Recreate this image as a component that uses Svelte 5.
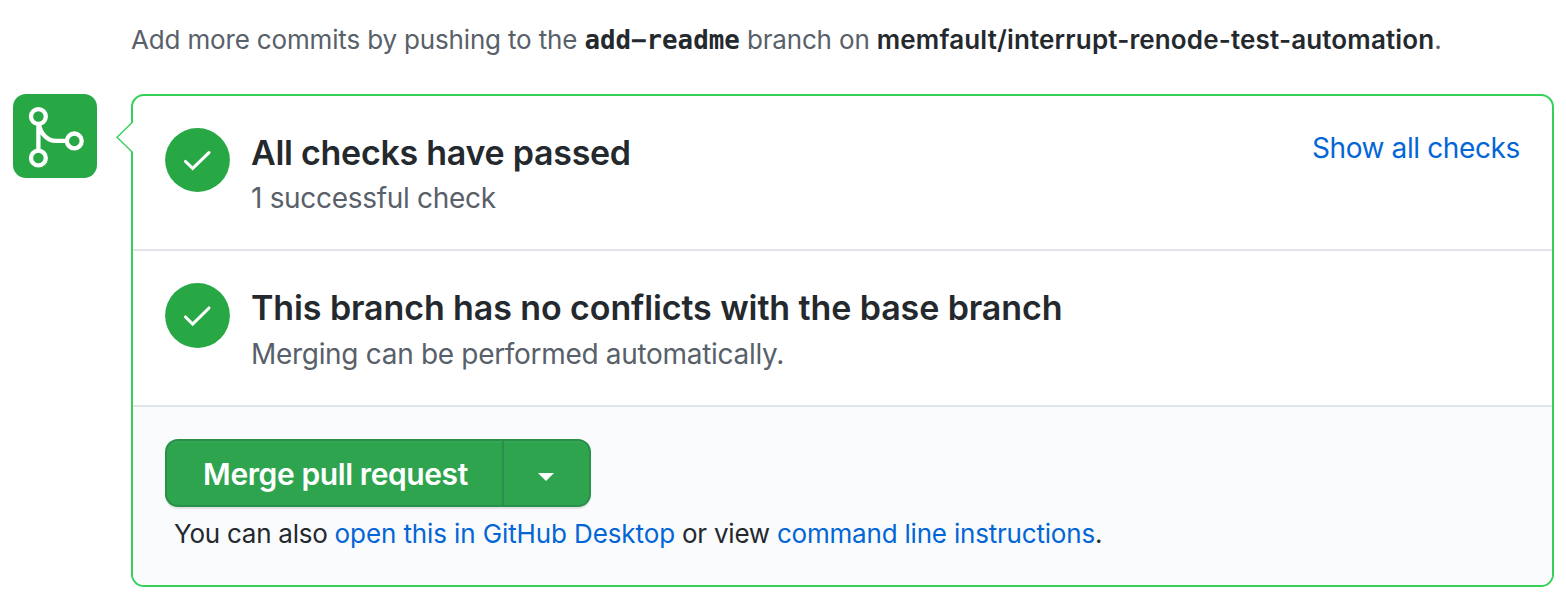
<script>
  const checks = [
    { title: 'All checks have passed', note: '1 successful check', cls: 'first', action: 'Show all checks' },
    { title: 'This branch has no conflicts with the base branch', note: 'Merging can be performed automatically.', cls: 'second', action: '' }
  ];
</script>

<main>
  <p class="hint">Add more commits by pushing to the <code>add−readme</code> branch on <b>memfault/interrupt-renode-test-automation</b>.</p>
  <div class="merge">
    <div class="badge">
      <svg width="84" height="84" viewBox="13 94 84 84" fill="none" stroke="#fff" stroke-width="4.3">
        <circle cx="38.4" cy="116.5" r="7.4" />
        <circle cx="38.4" cy="158" r="7.4" />
        <circle cx="74.3" cy="140.9" r="7.4" />
        <path d="M38.4 124v27M39 124C40.5 133.500 47 140.900 56 140.900H67" />
      </svg>
    </div>
    <section class="box">
      <svg class="arrow" width="18" height="32" viewBox="0 0 18 32">
        <path d="M18 0H16.3L1.2 15.200L16.3 30.500H18Z" fill="#fff" />
        <path d="M16.7 0L1 15.200L16.7 30.500" fill="none" stroke="#34d058" stroke-width="1.4" />
      </svg>
      {#each checks as check}
        <div class="row {check.cls}">
          <svg class="status" viewBox="0 0 65 65" preserveAspectRatio="none">
            <circle cx="32.5" cy="32.5" r="32.4" fill="#28a745" />
            <path d="M20.5 34L27.7 41L44 25" fill="none" stroke="#fff" stroke-width="3.1" stroke-linecap="round" />
          </svg>
          <div class="copy">
            <h3>{check.title}</h3>
            <p>{check.note}</p>
          </div>
          {#if check.action}<a class="action" href="#checks">{check.action}</a>{/if}
        </div>
      {/each}
      <footer>
        <div class="buttons">
          <button class="primary">Merge pull request</button>
          <button class="caret" aria-label="Select merge method"><svg width="16" height="8" viewBox="0 0 16 8"><path d="M0 0H16L8 8Z" fill="#fff" /></svg></button>
        </div>
        <p class="also">You can also <a class="desktop" href="#desktop">open this in GitHub Desktop</a> or view <a class="cli" href="#cli">command line instructions</a>.</p>
      </footer>
    </section>
  </div>
</main>

<style>
  :global(body) { background: #fff; }
  main { box-sizing: border-box; width: 1566px; height: 602px; padding: 20px 12px 0 13px; overflow: hidden; font-family: Inter, "Liberation Sans", sans-serif; color: #24292e; }
  p, h3 { margin: 0; white-space: pre; }
  a { color: #0366d6; text-decoration: none; }
  .hint { margin-left: 118px; height: 74px; font-size: 26px; line-height: 40px; letter-spacing: -.16px; color: #586069; }
  .hint b { font-weight: 600; letter-spacing: .15px; color: #24292e; }
  code { font: 700 25.800px/30px "DejaVu Sans Mono", monospace; letter-spacing: 0; color: #24292e; }
  .merge { display: flex; gap: 34px; align-items: flex-start; }
  .badge { width: 84px; height: 84px; border-radius: 13px; background: #28a745; }
  .badge svg { display: block; }
  .box { position: relative; box-sizing: border-box; width: 1423px; height: 493px; border: 2px solid #34d058; border-radius: 13px; }
  .arrow { position: absolute; left: -17px; top: 26px; }
  .row { display: flex; box-sizing: border-box; height: 155px; padding: 32px 32px 0; border-bottom: 2px solid #e1e4e8; }
  .second { height: 156px; }
  .status { flex: none; width: 65px; height: 65px; margin-right: 21px; }
  .first .status { height: 64px; }
  .copy { flex: 1; }
  h3 { font-size: 34px; font-weight: 600; line-height: 50px; letter-spacing: -.27px; }
  .second h3 { letter-spacing: -.1px; }
  .copy p { font-size: 28px; line-height: 40px; letter-spacing: -.31px; color: #586069; }
  .second p { line-height: 42px; }
  .action { font-size: 28px; line-height: 40px; letter-spacing: -.38px; }
  footer { box-sizing: border-box; height: 178px; padding: 32px; background: #fafbfc; border-radius: 0 0 11px 11px; }
  .buttons { display: flex; height: 68px; }
  button { box-sizing: border-box; height: 68px; margin: 0; padding: 0; border: 2px solid #2a8f48; background: #2ea44f; color: #fff; font: 600 30px/64px Inter, sans-serif; letter-spacing: -.4px; box-shadow: 0 2px 0 rgba(27,31,35,.1), inset 0 2px 0 rgba(255,255,255,.03); }
  .primary { width: 337px; padding: 2px 0 0 2px; line-height: 62px; border-right: 0; border-radius: 13px 0 0 13px; }
  .caret { display: flex; align-items: center; justify-content: center; width: 89px; border-radius: 0 13px 13px 0; }
  .caret svg { margin: 8px 2px 0 0; }
  .also { margin: 7px 0 0 9px; font-size: 26px; line-height: 40px; letter-spacing: -.25px; }
  .desktop { letter-spacing: -.11px; }
  .cli { letter-spacing: -.2px; }
</style>
